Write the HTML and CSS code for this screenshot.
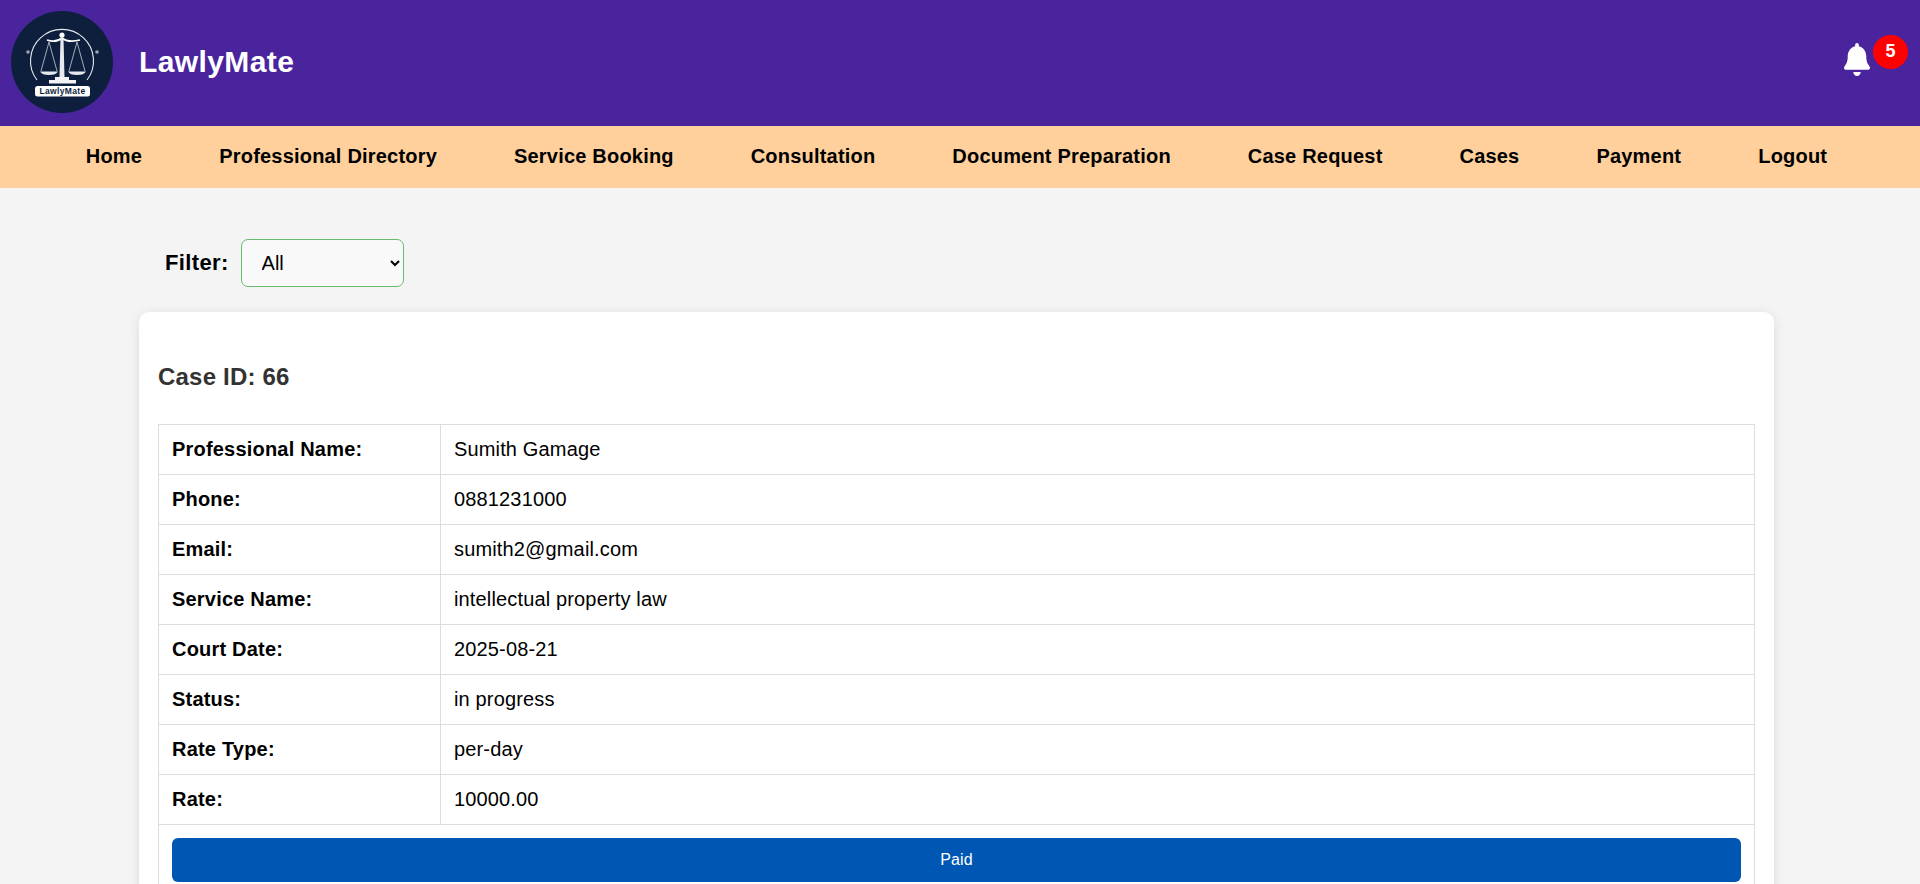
FILE: index.html
```html
<!DOCTYPE html>
<html lang="en">
<head>
    <meta charset="UTF-8">
    <meta name="viewport" content="width=device-width, initial-scale=1.0">
    <title>LawlyMate - Cases</title>
    <link rel="stylesheet" href="styles.css">
</head>
<body>
    <header class="top-bar">
        <div class="brand">
            <svg class="logo" viewBox="0 0 102 102" aria-label="LawlyMate logo">
                <circle cx="51" cy="51" r="51" fill="#0e1f3d"/>
                <path d="M26 69 A31.500 31.500 0 1 1 76 69" fill="none" stroke="#e6e9ee" stroke-width="1.100"/>
                <circle cx="17" cy="41" r="1.800" fill="#9aa3b2"/>
                <circle cx="86" cy="41" r="1.800" fill="#9aa3b2"/>
                <circle cx="51" cy="24" r="2.600" fill="#fff"/>
                <path d="M36 29 Q45 32 51 27 Q57 32 69 29" fill="none" stroke="#fff" stroke-width="1.800"/>
                <path d="M49.500 27 H52.500 L53.500 66 H48.500 Z" fill="#e6e9ee"/>
                <path d="M38 31 L30 60 M38 31 L46 60 M66 31 L58 60 M66 31 L74 60" stroke="#c9ced8" stroke-width=".8" fill="none"/>
                <path d="M29 60.500 H47 Q45 64 38 64 Q31 64 29 60.500 Z" fill="#e6e9ee"/>
                <path d="M57 60.500 H75 Q73 64 66 64 Q59 64 57 60.500 Z" fill="#e6e9ee"/>
                <path d="M44 66 H58 V69 H65 V72.500 H38 V69 H44 Z" fill="#f2f3f5"/>
                <rect x="24" y="75" width="55" height="10.500" rx="2.500" fill="#fff"/>
                <text x="51.500" y="83" class="logo-text" text-anchor="middle">LawlyMate</text>
            </svg>
            <span class="brand-name">LawlyMate</span>
        </div>
        <div class="notify">
            <svg class="bell" viewBox="0 0 448 512" preserveAspectRatio="none" aria-hidden="true">
                <path fill="#fff" d="M224 0c-17.700 0-32 14.300-32 32v19.200C119 66 64 130.600 64 208v18.800c0 47-17.300 92.400-48.500 127.600l-7.400 8.300c-8.400 9.400-10.400 22.900-5.300 34.400S19.400 416 32 416h384c12.600 0 24-7.400 29.200-18.900s3.100-25-5.300-34.400l-7.400-8.300C401.300 319.200 384 273.900 384 226.800V208c0-77.400-55-142-128-156.800V32c0-17.700-14.300-32-32-32zm45.300 493.300c12-12 18.700-28.300 18.700-45.300H160c0 17 6.700 33.300 18.700 45.300S207 512 224 512s33.300-6.700 45.300-18.700z"/>
            </svg>
            <span class="badge">5</span>
        </div>
    </header>

    <nav class="main-nav">
        <a href="#">Home</a>
        <a href="#">Professional Directory</a>
        <a href="#">Service Booking</a>
        <a href="#">Consultation</a>
        <a href="#">Document Preparation</a>
        <a href="#">Case Request</a>
        <a href="#">Cases</a>
        <a href="#">Payment</a>
        <a href="#">Logout</a>
    </nav>

    <main class="content">
        <div class="filter-row">
            <label for="filter">Filter:</label>
            <select id="filter">
                <option>All</option>
                <option>In progress</option>
                <option>Completed</option>
            </select>
        </div>

        <section class="case-card">
            <h2>Case ID: 66</h2>
            <table class="case-table">
                <tr><th>Professional Name:</th><td>Sumith Gamage</td></tr>
                <tr><th>Phone:</th><td>0881231000</td></tr>
                <tr><th>Email:</th><td>sumith2@gmail.com</td></tr>
                <tr><th>Service Name:</th><td>intellectual property law</td></tr>
                <tr><th>Court Date:</th><td>2025-08-21</td></tr>
                <tr><th>Status:</th><td>in progress</td></tr>
                <tr><th>Rate Type:</th><td>per-day</td></tr>
                <tr><th>Rate:</th><td>10000.00</td></tr>
                <tr><td colspan="2"><button class="paid-button">Paid</button></td></tr>
            </table>
        </section>
    </main>
</body>
</html>
```

FILE: styles.css
```css
html, body {
    height: 100%;
    overflow: hidden;
}

body {
    margin: 0;
    font-family: "Liberation Sans", Arial, sans-serif;
    background-color: #f4f4f4;
    color: #000;
}

/* Header */
.top-bar {
    display: flex;
    align-items: center;
    justify-content: space-between;
    height: 126px;
    padding: 0 22px 2px 11px;
    box-sizing: border-box;
    background-color: #4a249d;
}

.brand {
    display: flex;
    align-items: center;
    gap: 26px;
}

.logo {
    width: 102px;
    height: 102px;
}

.logo-text {
    font-family: "Liberation Sans", Arial, sans-serif;
    font-size: 8.500px;
    font-weight: bold;
    letter-spacing: .35px;
    fill: #0e1f3d;
}

.brand-name {
    font-size: 30px;
    font-weight: bold;
    letter-spacing: .4px;
    color: #fff;
}

.notify {
    position: relative;
    display: flex;
    margin-top: -6px;
}

.bell {
    width: 26px;
    height: 33px;
    margin-right: 28px;
}

.badge {
    position: absolute;
    top: -8px;
    right: -10px;
    width: 35px;
    height: 34px;
    border-radius: 50%;
    background-color: #f00;
    color: #fff;
    font-size: 18px;
    font-weight: bold;
    line-height: 32px;
    text-align: center;
}

/* Nav */
.main-nav {
    display: flex;
    justify-content: center;
    gap: 77px;
    height: 61px;
    padding: 0 7px 1px 0;
    align-items: center;
    background-color: #ffd09b;
}

.main-nav a {
    font-size: 20px;
    font-weight: bold;
    letter-spacing: .2px;
    color: #000;
    text-decoration: none;
}

/* Page content */
.content {
    padding: 51px 146px 0 139px;
}

.filter-row {
    display: flex;
    align-items: center;
    gap: 12px;
    padding-left: 26px;
    margin-bottom: 25px;
}

.filter-row label {
    font-size: 22px;
    font-weight: bold;
    letter-spacing: .35px;
}

.filter-row select {
    width: 163px;
    height: 48px;
    padding: 0 16px;
    border: 1px solid #66bb6a;
    border-radius: 7px;
    background-color: #f9f9f9;
    font-family: inherit;
    font-size: 20px;
    color: #000;
}

.case-card {
    padding: 20px 19px;
    border-radius: 10px;
    background-color: #fff;
    box-shadow: 0 2px 12px rgba(0, 0, 0, 0.1);
}

.case-card h2 {
    margin: 31px 0 33px;
    font-size: 24px;
    letter-spacing: .2px;
    color: #333;
}

.case-table {
    width: 100%;
    border-collapse: collapse;
    font-size: 20px;
}

.case-table th,
.case-table td {
    height: 49px;
    padding: 0 13px;
    border: 1px solid #ddd;
    text-align: left;
    font-weight: normal;
    letter-spacing: .15px;
}

.case-table th {
    width: 255px;
    font-weight: bold;
    letter-spacing: .2px;
}

.paid-button {
    display: block;
    width: 100%;
    height: 44px;
    margin: 13px 0;
    border: none;
    border-radius: 6px;
    background-color: #0056b3;
    color: #fff;
    font-family: inherit;
    font-size: 16px;
    letter-spacing: .1px;
}
```
